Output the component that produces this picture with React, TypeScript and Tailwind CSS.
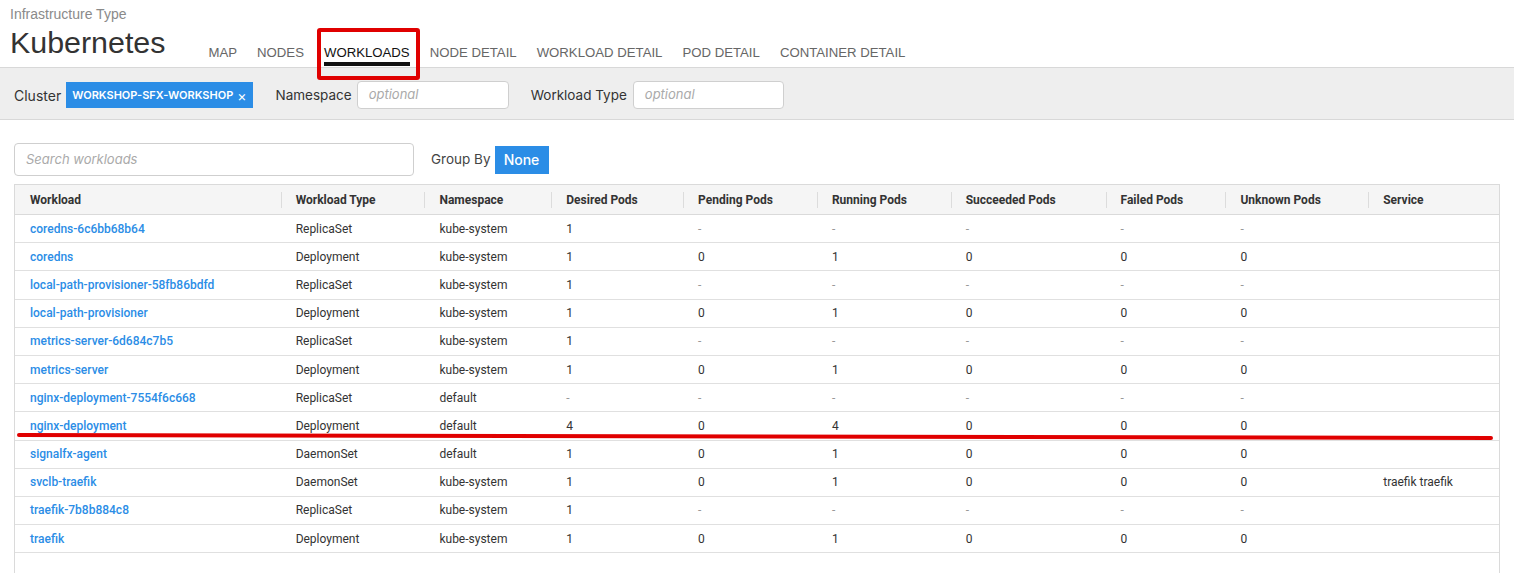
import React from "react";

const cols = [266, 144, 127, 132, 134, 134, 155, 120, 143, 131];
const headers = [
  "Workload",
  "Workload Type",
  "Namespace",
  "Desired Pods",
  "Pending Pods",
  "Running Pods",
  "Succeeded Pods",
  "Failed Pods",
  "Unknown Pods",
  "Service",
];

const D = ["-", "-", "-", "-", "-"];
const Z = ["0", "1", "0", "0", "0"];

const rows: string[][] = [
  ["coredns-6c6bb68b64", "ReplicaSet", "kube-system", "1", ...D, ""],
  ["coredns", "Deployment", "kube-system", "1", ...Z, ""],
  ["local-path-provisioner-58fb86bdfd", "ReplicaSet", "kube-system", "1", ...D, ""],
  ["local-path-provisioner", "Deployment", "kube-system", "1", ...Z, ""],
  ["metrics-server-6d684c7b5", "ReplicaSet", "kube-system", "1", ...D, ""],
  ["metrics-server", "Deployment", "kube-system", "1", ...Z, ""],
  ["nginx-deployment-7554f6c668", "ReplicaSet", "default", "-", ...D, ""],
  ["nginx-deployment", "Deployment", "default", "4", "0", "4", "0", "0", "0", ""],
  ["signalfx-agent", "DaemonSet", "default", "1", ...Z, ""],
  ["svclb-traefik", "DaemonSet", "kube-system", "1", ...Z, "traefik traefik"],
  ["traefik-7b8b884c8", "ReplicaSet", "kube-system", "1", ...D, ""],
  ["traefik", "Deployment", "kube-system", "1", ...Z, ""],
];

const tabs = ["MAP", "NODES", "WORKLOADS", "NODE DETAIL", "WORKLOAD DETAIL", "POD DETAIL", "CONTAINER DETAIL"];

export default function App() {
  return (
    <div className="relative min-h-[573px] bg-white text-[#333]" style={{ fontFamily: "Inter, 'Noto Sans', sans-serif" }}>
      {/* header */}
      <div className="flex h-[68px] items-end border-b border-[#d8d8d8] px-[10px]" style={{ fontFamily: "'Liberation Sans', sans-serif" }}>
        <div className="flex flex-col pb-[8px]">
          <div className="text-[14px] leading-[16px] text-[#8a8a8a]">Infrastructure Type</div>
          <div className="mt-[3px] text-[30.4px] leading-[34px] text-[#333]">Kubernetes</div>
        </div>
        <div className="ml-[43px] flex gap-[20px]">
          {tabs.map((t) => (
            <div key={t} className="flex flex-col pb-[1px]">
              <span className={`text-[13.2px] leading-[15px] ${t === "WORKLOADS" ? "text-[#111]" : "text-[#666]"}`}>{t}</span>
              <div className={`mt-[2px] h-[4px] ${t === "WORKLOADS" ? "bg-[#111]" : "bg-transparent"}`} />
            </div>
          ))}
        </div>
      </div>

      {/* filter bar */}
      <div className="flex h-[52px] items-center border-b border-[#d8d8d8] bg-[#eeeeee] pl-[14px] pt-[3px] text-[13.5px]">
        <span className="mr-[5px] text-[14px]">Cluster</span>
        <span className="flex h-[26px] items-center bg-[#2b8de6] px-[6px] text-[11px] font-semibold text-white">
          WORKSHOP-SFX-WORKSHOP <span className="ml-[4px] text-[14px] font-normal">×</span>
        </span>
        <span className="ml-[23px] mr-[5px]">Namespace</span>
        <div className="flex h-[28px] w-[152px] items-center rounded-[4px] border border-[#cfcfcf] bg-white px-[11px] text-[13px] italic text-[#aaa]">
          optional
        </div>
        <span className="ml-[22px] mr-[6px]">Workload Type</span>
        <div className="flex h-[28px] w-[151px] items-center rounded-[4px] border border-[#cfcfcf] bg-white px-[11px] text-[13px] italic text-[#aaa]">
          optional
        </div>
      </div>

      {/* search */}
      <div className="mt-[23px] flex items-center pl-[14px]">
        <div className="flex h-[33px] w-[400px] items-center rounded-[4px] border border-[#cfcfcf] px-[11px] text-[13px] italic text-[#aaa]">
          Search workloads
        </div>
        <span className="ml-[17px] mr-[4px] text-[13.5px] text-[#444]">Group By</span>
        <div className="flex h-[28px] w-[54px] items-center justify-center bg-[#2b8de6] text-[14px] font-medium text-white">None</div>
      </div>

      {/* table */}
      <div
        className="mx-[14px] mt-[8px] h-[400px] w-[1486px] border border-b-0 border-[#dadada] text-[12px]"
        style={{ fontFamily: "Roboto, 'Noto Sans', sans-serif" }}
      >
        <div className="flex h-[30px] items-center border-b border-[#dadada] bg-[#f5f5f5] font-bold text-[#333]">
          {headers.map((h, i) => (
            <div key={h} className="relative flex h-full items-center" style={{ width: cols[i] }}>
              {i > 0 && <div className="absolute left-0 top-[7px] h-[16px] w-px bg-[#dcdcdc]" />}
              <span className="pl-[15px]">{h}</span>
            </div>
          ))}
        </div>
        {rows.map((r, ri) => (
          <div key={ri} className="box-border flex h-[28.2px] items-center border-b border-[#e0e0e0]">
            {r.map((c, i) => (
              <div
                key={i}
                className={`pl-[15px] ${i === 0 ? "font-medium text-[#2b8de6]" : c === "-" ? "text-[#999]" : "text-[#333]"}`}
                style={{ width: cols[i] }}
              >
                {c}
              </div>
            ))}
          </div>
        ))}
      </div>

      {/* annotations */}
      <div className="pointer-events-none absolute left-[317px] top-[28px] h-[52px] w-[103px] rounded-[3px] border-[4px] border-[#e00000]" />
      <svg className="pointer-events-none absolute left-0 top-0" width="1514" height="573">
        <line x1="19" y1="435" x2="1491" y2="438" stroke="#e00000" strokeWidth="4" strokeLinecap="round" />
      </svg>
    </div>
  );
}
